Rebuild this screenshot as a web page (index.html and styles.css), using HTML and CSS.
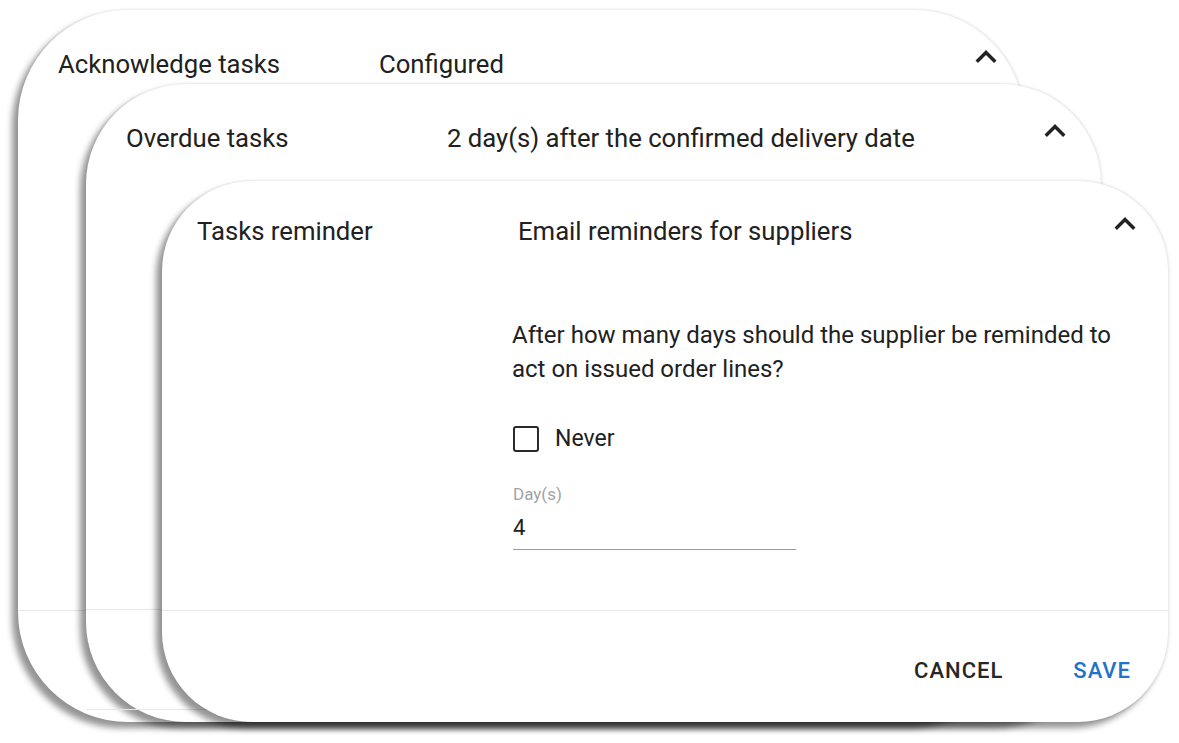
FILE: index.html
```html
<!DOCTYPE html>
<html lang="en">
<head>
<meta charset="utf-8">
<title>Task settings</title>
<link rel="stylesheet" href="styles.css">
</head>
<body>
<div class="stack">
  <section class="card card-ack">
    <header class="card-head">
      <span class="head-label">Acknowledge tasks</span>
      <span class="head-value">Configured</span>
      <svg class="chevron" viewBox="0 0 24 24" aria-hidden="true"><path d="M12 8l-6 6 1.41 1.41L12 10.83l4.59 4.58L18 14z"/></svg>
    </header>
    <div class="card-body"></div>
    <footer class="card-foot"></footer>
  </section>

  <section class="card card-overdue">
    <header class="card-head">
      <span class="head-label">Overdue tasks</span>
      <span class="head-value">2 day(s) after the confirmed delivery date</span>
      <svg class="chevron" viewBox="0 0 24 24" aria-hidden="true"><path d="M12 8l-6 6 1.41 1.41L12 10.83l4.59 4.58L18 14z"/></svg>
    </header>
    <div class="card-body"></div>
    <footer class="card-foot card-foot-edge"></footer>
  </section>

  <section class="card card-reminder">
    <header class="card-head">
      <span class="head-label">Tasks reminder</span>
      <span class="head-value">Email reminders for suppliers</span>
      <svg class="chevron" viewBox="0 0 24 24" aria-hidden="true"><path d="M12 8l-6 6 1.41 1.41L12 10.83l4.59 4.58L18 14z"/></svg>
    </header>
    <div class="card-body reminder-body">
      <p class="question">After how many days should the supplier be reminded to act on issued order lines?</p>
      <label class="check-row">
        <span class="checkbox"></span>
        <span class="check-text">Never</span>
      </label>
      <div class="field">
        <span class="field-label">Day(s)</span>
        <span class="field-input">4</span>
      </div>
    </div>
    <footer class="card-foot actions">
      <button class="btn btn-cancel" type="button">Cancel</button>
      <button class="btn btn-save" type="button">Save</button>
    </footer>
  </section>
</div>
</body>
</html>
```

FILE: styles.css
```css
html, body {
  margin: 0;
  padding: 0;
  background: #ffffff;
  overflow: hidden;
}

body {
  font-family: Roboto, "Liberation Sans", Arial, sans-serif;
  color: #212121;
}

.stack {
  display: grid;
  width: 1179px;
  height: 743px;
  align-items: start;
  justify-items: start;
}

.card {
  grid-area: 1 / 1;
  display: flex;
  flex-direction: column;
  background: #ffffff;
  box-sizing: border-box;
  box-shadow: -6px 6px 6px rgba(0, 0, 0, 0.42), 0 -1px 3px rgba(0, 0, 0, 0.07), 2px 0 3px rgba(0, 0, 0, 0.06);
}

.card-ack {
  margin-left: 18px;
  margin-top: 10px;
  width: 1006px;
  height: 712px;
  border-radius: 110px;
  --pad-l: 40px;
  --pad-t: 26px;
  --pad-r: 17px;
}

.card-overdue {
  margin-left: 86px;
  margin-top: 84px;
  width: 1015px;
  height: 638px;
  border-radius: 100px;
  --pad-l: 40px;
  --pad-t: 26px;
  --pad-r: 25px;
}

.card-reminder {
  margin-left: 162px;
  margin-top: 181px;
  width: 1006px;
  height: 541px;
  border-radius: 90px;
  --pad-l: 35px;
  --pad-t: 22px;
  --pad-r: 22px;
}

.card-head {
  display: grid;
  grid-template-columns: 321px 1fr 42px;
  align-items: start;
  padding: var(--pad-t) var(--pad-r) 0 var(--pad-l);
}

.head-label,
.head-value {
  font-size: 25.7px;
  line-height: 34px;
  margin-top: 11px;
  white-space: nowrap;
}

.chevron {
  width: 42px;
  height: 42px;
  fill: #222222;
  display: block;
}

.card-body {
  flex: 1;
}

.card-foot {
  height: 112px;
  border-top: 1.5px solid #e6e6e6;
  box-sizing: border-box;
}

.card-foot-edge {
  border-bottom: 1.5px solid #e6e6e6;
  margin-bottom: 12px;
  height: 101px;
}

.reminder-body {
  padding: 70px 0 0 350px;
}

.question {
  margin: 0;
  width: 620px;
  font-size: 24px;
  line-height: 34px;
}

.check-row {
  display: flex;
  align-items: center;
  gap: 16px;
  height: 34px;
  margin-top: 36px;
  padding-left: 1px;
}

.checkbox {
  width: 26px;
  height: 26px;
  box-sizing: border-box;
  border: 2.6px solid #2a2a2a;
  border-radius: 3px;
}

.check-text {
  font-size: 23px;
  line-height: 34px;
}

.field {
  display: flex;
  flex-direction: column;
  width: 283px;
  margin-top: 28px;
  margin-left: 1px;
  border-bottom: 1.5px solid #9c9c9c;
}

.field-label {
  font-size: 17px;
  line-height: 20px;
  color: #a3a3a3;
}

.field-input {
  font-size: 22px;
  line-height: 30px;
  margin-top: 9px;
  padding-bottom: 6px;
}

.actions {
  display: flex;
  justify-content: flex-end;
  align-items: center;
  gap: 38px;
  padding: 8px 21px 0 0;
}

.btn {
  font-family: Roboto, "Liberation Sans", Arial, sans-serif;
  font-weight: 500;
  font-size: 22px;
  letter-spacing: 1px;
  text-transform: uppercase;
  background: none;
  border: 0;
  padding: 8px 16px;
  cursor: pointer;
}

.btn-cancel {
  color: #262626;
}

.btn-save {
  color: #1f74c9;
}
```
